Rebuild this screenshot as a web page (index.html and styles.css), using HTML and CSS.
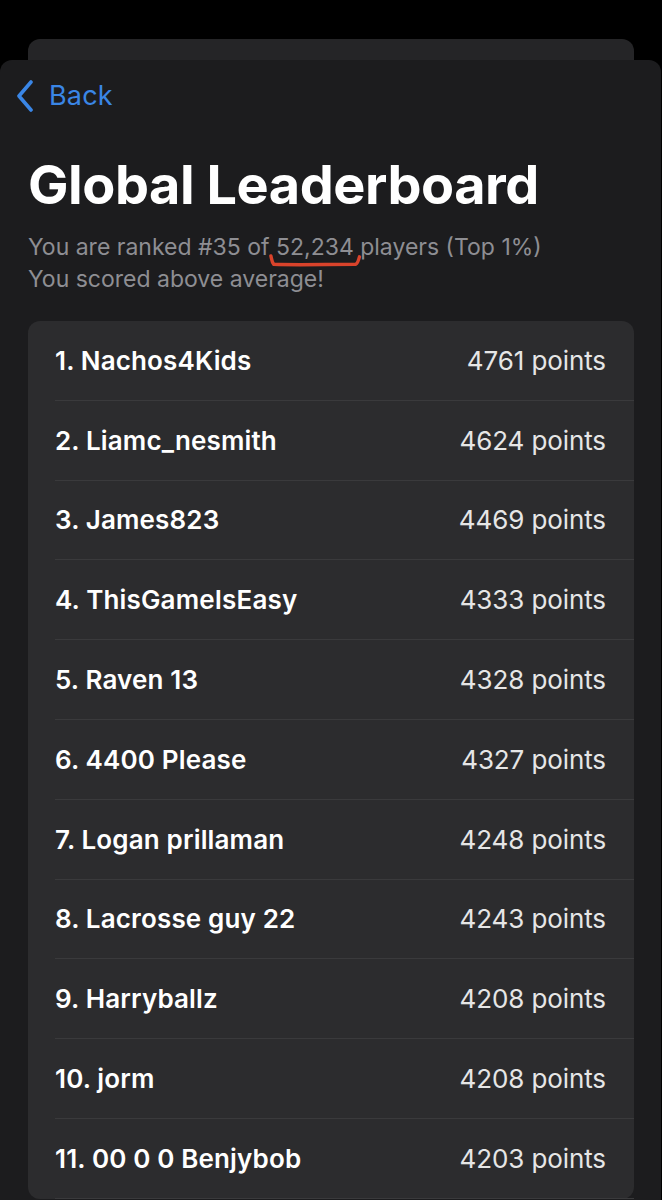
FILE: index.html
```html
<!DOCTYPE html>
<html lang="en">
<head>
<meta charset="utf-8">
<title>Global Leaderboard</title>
<link rel="stylesheet" href="styles.css">
</head>
<body>
<div class="back-sheet"></div>
<main class="sheet">
  <nav class="nav">
    <a class="back" href="#">
      <svg class="chevron" width="20" height="32" viewBox="0 0 20 32"><path d="M16 2 L4 16 L16 30" fill="none" stroke="currentColor" stroke-width="3.6" stroke-linecap="round" stroke-linejoin="round"/></svg>
      <span>Back</span>
    </a>
  </nav>
  <h1 class="title">Global Leaderboard</h1>
  <p class="subtitle">You are ranked #35 of<span class="mark"> 52,234<svg class="scribble" viewBox="0 0 100 16" preserveAspectRatio="none"><path d="M2 2 C3 6 3 9 5 11 C30 12 60 11 92 11 C94 10 95 7 96 3" fill="none" stroke="#d9432b" stroke-width="3.4" stroke-linecap="round" vector-effect="non-scaling-stroke"/></svg></span> players (Top 1%)<br>You scored above average!</p>
  <ol class="board">
    <li class="row"><span class="name">1. Nachos4Kids</span><span class="pts">4761 points</span></li>
    <li class="row"><span class="name">2. Liamc_nesmith</span><span class="pts">4624 points</span></li>
    <li class="row"><span class="name">3. James823</span><span class="pts">4469 points</span></li>
    <li class="row"><span class="name">4. ThisGameIsEasy</span><span class="pts">4333 points</span></li>
    <li class="row"><span class="name">5. Raven 13</span><span class="pts">4328 points</span></li>
    <li class="row"><span class="name">6. 4400 Please</span><span class="pts">4327 points</span></li>
    <li class="row"><span class="name">7. Logan prillaman</span><span class="pts">4248 points</span></li>
    <li class="row"><span class="name">8. Lacrosse guy 22</span><span class="pts">4243 points</span></li>
    <li class="row"><span class="name">9. Harryballz</span><span class="pts">4208 points</span></li>
    <li class="row"><span class="name">10. jorm</span><span class="pts">4208 points</span></li>
    <li class="row"><span class="name">11. 00 0 0 Benjybob</span><span class="pts">4203 points</span></li>
  </ol>
</main>
</body>
</html>
```

FILE: styles.css
```css
* { box-sizing: border-box; }
html, body { margin: 0; padding: 0; }
body {
  background: #000;
  font-family: Inter, "Noto Sans", "Liberation Sans", sans-serif;
  color: #fff;
  padding-top: 39px;
  height: 1200px;
  overflow: hidden;
}
.back-sheet {
  height: 40px;
  margin: 0 28px -19px 28px;
  background: #252527;
  border-radius: 12px 12px 0 0;
}
.sheet {
  background: #1c1c1e;
  border-radius: 12px 12px 0 0;
  margin-right: 1px;
  min-height: 1200px;
}
.nav {
  height: 70px;
  display: flex;
  align-items: center;
  padding-left: 15px;
}
.back {
  display: flex;
  align-items: center;
  gap: 14px;
  color: #3a86e6;
  text-decoration: none;
  font-size: 27px;
  letter-spacing: 0.2px;
}
.chevron { display: block; margin-top: 1px; }
.title {
  margin: 23px 0 0 28px;
  font-size: 54px;
  line-height: 64px;
  font-weight: 700;
  letter-spacing: -0.45px;
}
.subtitle {
  margin: 14px 0 0 28px;
  font-size: 23px;
  line-height: 32px;
  color: #8e8e93;
  letter-spacing: 0;
}
.mark { position: relative; }
.scribble {
  position: absolute;
  left: -1px;
  top: 21px;
  width: calc(100% + 10px);
  height: 15px;
  overflow: visible;
}
.board {
  list-style: none;
  margin: 26px 27px 0 28px;
  padding: 0;
  background: #2c2c2e;
  border-radius: 12px;
}
.row {
  height: 79.8px;
  margin-left: 27px;
  padding-right: 28px;
  display: flex;
  align-items: center;
  justify-content: space-between;
  border-bottom: 1px solid #3a3a3c;
  font-size: 26px;
}
.name { font-weight: 600; color: #fff; letter-spacing: 0.15px; }
.pts { font-weight: 400; color: #e6e6e6; letter-spacing: -0.1px; }
```
